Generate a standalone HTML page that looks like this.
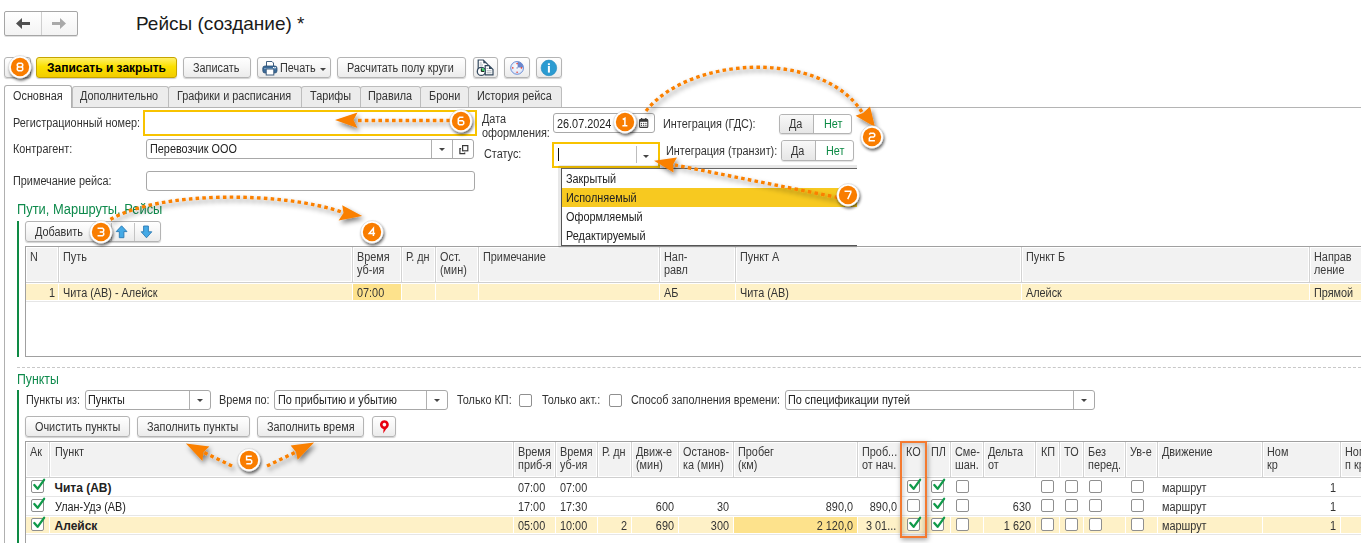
<!DOCTYPE html>
<html><head><meta charset="utf-8">
<style>
html,body{margin:0;padding:0;background:#fff;}
body{width:1361px;height:543px;position:relative;overflow:hidden;font-family:"Liberation Sans",sans-serif;}
.t{position:absolute;white-space:nowrap;}
.b{position:absolute;}
svg.b{overflow:visible;}
</style></head><body>

<div class="b" style="left:4px;top:11px;width:74px;height:25px;border:1px solid #a6a6a6;border-radius:2px;background:linear-gradient(#ffffff,#f3f3f3);box-sizing:border-box;box-shadow:0 1px 0 rgba(0,0,0,.12)"></div>
<div class="b" style="left:41px;top:12px;width:1px;height:23px;background:#cfcfcf"></div>
<svg class="b" style="left:15px;top:17px" width="16" height="13" viewBox="0 0 16 13"><path d="M1 6.5 L7 1 L7 5 L15 5 L15 8 L7 8 L7 12 Z" fill="#505050"/></svg>
<svg class="b" style="left:51px;top:17px" width="16" height="13" viewBox="0 0 16 13"><path d="M15 6.5 L9 1 L9 5 L1 5 L1 8 L9 8 L9 12 Z" fill="#a9a9a9"/></svg>
<div class="t" style="left:136px;top:13.2px;font-size:19px;line-height:22px;color:#1a1a1a;font-weight:400;letter-spacing:0px;">Рейсы (создание) *</div>
<div class="b" style="left:4px;top:57px;width:27px;height:21px;border:1px solid #b4b4b4;border-radius:3px;background:linear-gradient(#ffffff,#f6f6f6 50%,#ebebeb);box-shadow:0 1px 1px rgba(0,0,0,.18);box-sizing:border-box;"></div>
<div class="b" style="left:36px;top:57px;width:141px;height:21px;border:1px solid #c6a400;border-radius:3px;background:linear-gradient(#fff06a,#fbe000 45%,#f2cc00);box-sizing:border-box;box-shadow:0 1px 1px rgba(0,0,0,.2)"></div>
<div class="t" style="left:47px;top:61px;font-size:12px;line-height:14px;color:#000;font-weight:700;letter-spacing:0px;">Записать и закрыть</div>
<div class="b" style="left:183px;top:57px;width:67.5px;height:21px;border:1px solid #b4b4b4;border-radius:3px;background:linear-gradient(#ffffff,#f6f6f6 50%,#ebebeb);box-shadow:0 1px 1px rgba(0,0,0,.18);box-sizing:border-box;"></div>
<div class="t" style="left:193px;top:61px;font-size:12px;line-height:14px;color:#333;font-weight:400;letter-spacing:0px;transform:scaleX(0.905);transform-origin:0 0;">Записать</div>
<div class="b" style="left:257px;top:57px;width:73.5px;height:21px;border:1px solid #b4b4b4;border-radius:3px;background:linear-gradient(#ffffff,#f6f6f6 50%,#ebebeb);box-shadow:0 1px 1px rgba(0,0,0,.18);box-sizing:border-box;"></div>
<svg class="b" style="left:262px;top:60px" width="16" height="16" viewBox="0 0 16 16"><path d="M4.5 1.5 H10 L11.5 3 V7 H4.5 Z" fill="#fff" stroke="#3f5f80" stroke-width="1"/><rect x="0.8" y="6" width="14.2" height="7" rx="2.2" fill="#3a6a98" stroke="#2a4f75" stroke-width=".8"/><rect x="2.2" y="8" width="11.4" height="1.2" fill="#7ea6cc"/><rect x="11" y="7" width="1.2" height="1" fill="#fff"/><rect x="12.6" y="7" width="1.2" height="1" fill="#fff"/><rect x="4.2" y="9" width="7.6" height="6" fill="#fff" stroke="#3f5f80" stroke-width="1"/></svg>
<div class="t" style="left:280px;top:61px;font-size:12px;line-height:14px;color:#333;font-weight:400;letter-spacing:0px;transform:scaleX(0.905);transform-origin:0 0;">Печать</div>
<div class="b" style="left:320px;top:68px;width:0;height:0;border-left:3px solid transparent;border-right:3px solid transparent;border-top:3px solid #444"></div>
<div class="b" style="left:337px;top:57px;width:128.5px;height:21px;border:1px solid #b4b4b4;border-radius:3px;background:linear-gradient(#ffffff,#f6f6f6 50%,#ebebeb);box-shadow:0 1px 1px rgba(0,0,0,.18);box-sizing:border-box;"></div>
<div class="t" style="left:347px;top:61px;font-size:12px;line-height:14px;color:#333;font-weight:400;letter-spacing:0px;transform:scaleX(0.905);transform-origin:0 0;">Расчитать полу круги</div>
<div class="b" style="left:472.5px;top:57px;width:25px;height:21px;border:1px solid #b4b4b4;border-radius:3px;background:linear-gradient(#ffffff,#f6f6f6 50%,#ebebeb);box-shadow:0 1px 1px rgba(0,0,0,.18);box-sizing:border-box;"></div>
<svg class="b" style="left:476px;top:59px" width="19" height="18" viewBox="0 0 19 18"><path d="M2.2 1 H7.3 L12 5.7 V9.5 H2.2 Z" fill="#fff" stroke="#34495e" stroke-width="1.2"/><path d="M7.3 1 V4.2 H10.5 Z" fill="#34495e"/><path d="M3.6 4 H5.8 M3.6 6 H7" stroke="#9aa4ae" stroke-width=".9"/><path d="M9.2 6.6 H13 L17 10.6 V15.8 H9.2 Z" fill="#fff" stroke="#34495e" stroke-width="1.2"/><path d="M13 6.6 V10 H16.4 Z" fill="#34495e"/><path d="M10.6 9.5 H12.4 M10.6 11.8 H15.6 M10.6 13.8 H15.6" stroke="#9aa4ae" stroke-width=".9"/><circle cx="5.3" cy="12.4" r="4" fill="#fff" stroke="#34495e" stroke-width="1.3"/><path d="M5.3 12.4 V9 A3.4 3.4 0 0 1 8.7 12.4 Z" fill="#3cd46a"/><path d="M5.3 9.4 V12.4 H8.2" stroke="#111" stroke-width="1" fill="none"/></svg>
<div class="b" style="left:504px;top:57px;width:25.5px;height:21px;border:1px solid #b4b4b4;border-radius:3px;background:linear-gradient(#ffffff,#f6f6f6 50%,#ebebeb);box-shadow:0 1px 1px rgba(0,0,0,.18);box-sizing:border-box;"></div>
<svg class="b" style="left:509px;top:60px" width="17" height="17" viewBox="0 0 17 17"><defs><radialGradient id="cg" cx=".5" cy=".4" r=".6"><stop offset="0" stop-color="#ffffff"/><stop offset="1" stop-color="#d8e2f6"/></radialGradient></defs><circle cx="8.1" cy="7.9" r="6.4" fill="url(#cg)" stroke="#6d8fd6" stroke-width="1"/><path d="M8.6 1.8 A6 6 0 0 1 14.2 7.4 H8.6 Z" fill="#6a86cc"/><circle cx="8.1" cy="3.6" r="0.8" fill="#f03a2a"/><circle cx="12.4" cy="7.9" r="0.8" fill="#f03a2a"/><circle cx="8.1" cy="12.3" r="0.8" fill="#f03a2a"/><circle cx="3.8" cy="7.9" r="0.8" fill="#f03a2a"/><circle cx="8.1" cy="7.9" r="0.6" fill="#4a6ab0"/></svg>
<div class="b" style="left:536px;top:57px;width:25.5px;height:21px;border:1px solid #b4b4b4;border-radius:3px;background:linear-gradient(#ffffff,#f6f6f6 50%,#ebebeb);box-shadow:0 1px 1px rgba(0,0,0,.18);box-sizing:border-box;"></div>
<svg class="b" style="left:540px;top:59px" width="18" height="18" viewBox="0 0 18 18"><circle cx="8.9" cy="8.9" r="7.8" fill="#2b9bd1" stroke="#1f86bb" stroke-width=".6"/><rect x="7.9" y="4.3" width="2" height="1.8" fill="#fff"/><rect x="7.9" y="7" width="2" height="6.6" fill="#fff"/></svg>
<div class="b" style="left:72px;top:86px;width:97px;height:22px;border:1px solid #bdbdbd;border-bottom:none;border-radius:3px 3px 0 0;background:#ececec;box-sizing:border-box"></div>
<div class="b" style="left:168px;top:86px;width:134px;height:22px;border:1px solid #bdbdbd;border-bottom:none;border-radius:3px 3px 0 0;background:#ececec;box-sizing:border-box"></div>
<div class="b" style="left:301px;top:86px;width:60px;height:22px;border:1px solid #bdbdbd;border-bottom:none;border-radius:3px 3px 0 0;background:#ececec;box-sizing:border-box"></div>
<div class="b" style="left:360px;top:86px;width:61px;height:22px;border:1px solid #bdbdbd;border-bottom:none;border-radius:3px 3px 0 0;background:#ececec;box-sizing:border-box"></div>
<div class="b" style="left:420px;top:86px;width:49px;height:22px;border:1px solid #bdbdbd;border-bottom:none;border-radius:3px 3px 0 0;background:#ececec;box-sizing:border-box"></div>
<div class="b" style="left:468px;top:86px;width:94px;height:22px;border:1px solid #bdbdbd;border-bottom:none;border-radius:3px 3px 0 0;background:#ececec;box-sizing:border-box"></div>
<div class="b" style="left:4px;top:85px;width:68px;height:23px;border:1px solid #b0b0b0;border-bottom:none;border-radius:3px 3px 0 0;background:#fff;box-sizing:border-box"></div>
<div class="t" style="left:13px;top:89px;font-size:12px;line-height:14px;color:#333;font-weight:400;letter-spacing:0px;transform:scaleX(0.905);transform-origin:0 0;">Основная</div>
<div class="t" style="left:80px;top:89px;font-size:12px;line-height:14px;color:#333;font-weight:400;letter-spacing:0px;transform:scaleX(0.905);transform-origin:0 0;">Дополнительно</div>
<div class="t" style="left:177px;top:89px;font-size:12px;line-height:14px;color:#333;font-weight:400;letter-spacing:0px;transform:scaleX(0.905);transform-origin:0 0;">Графики и расписания</div>
<div class="t" style="left:309.8px;top:89px;font-size:12px;line-height:14px;color:#333;font-weight:400;letter-spacing:0px;transform:scaleX(0.905);transform-origin:0 0;">Тарифы</div>
<div class="t" style="left:368.1px;top:89px;font-size:12px;line-height:14px;color:#333;font-weight:400;letter-spacing:0px;transform:scaleX(0.905);transform-origin:0 0;">Правила</div>
<div class="t" style="left:429px;top:89px;font-size:12px;line-height:14px;color:#333;font-weight:400;letter-spacing:0px;transform:scaleX(0.905);transform-origin:0 0;">Брони</div>
<div class="t" style="left:476.9px;top:89px;font-size:12px;line-height:14px;color:#333;font-weight:400;letter-spacing:0px;transform:scaleX(0.905);transform-origin:0 0;">История рейса</div>
<div class="b" style="left:71.5px;top:107px;width:1289.5px;height:1px;background:#b4b4b4"></div>
<div class="b" style="left:4px;top:108px;width:1px;height:435px;background:#b0b0b0"></div>
<div class="t" style="left:13.4px;top:116.3px;font-size:12px;line-height:14px;color:#333;font-weight:400;letter-spacing:0px;transform:scaleX(0.905);transform-origin:0 0;">Регистрационный номер:</div>
<div class="b" style="left:143px;top:110px;width:333.5px;height:26px;border:2px solid #f8c300;background:#fff;box-sizing:border-box"></div>
<div class="t" style="left:13.4px;top:142px;font-size:12px;line-height:14px;color:#333;font-weight:400;letter-spacing:0px;transform:scaleX(0.905);transform-origin:0 0;">Контрагент:</div>
<div class="b" style="left:146px;top:139px;width:328px;height:20px;border:1px solid #a8a8a8;border-radius:3px;background:#fff;box-sizing:border-box;"></div>
<div class="b" style="left:431px;top:140px;width:1px;height:18px;background:#b0b0b0"></div>
<div class="b" style="left:452px;top:140px;width:1px;height:18px;background:#b0b0b0"></div>
<div class="b" style="left:438.5px;top:147.5px;width:0;height:0;border-left:3px solid transparent;border-right:3px solid transparent;border-top:3px solid #444"></div>
<svg class="b" style="left:457px;top:143px" width="13" height="13" viewBox="0 0 13 13"><rect x="5.6" y="2.6" width="5.2" height="5.2" fill="#fff" stroke="#3a3a3a" stroke-width="1.2"/><path d="M4.1 5.6 H2.9 V10.7 H7.7 V9.5" fill="none" stroke="#3a3a3a" stroke-width="1.2"/></svg>
<div class="t" style="left:150px;top:142px;font-size:12px;line-height:14px;color:#222;font-weight:400;letter-spacing:0px;transform:scaleX(0.905);transform-origin:0 0;">Перевозчик ООО</div>
<div class="t" style="left:13.4px;top:174px;font-size:12px;line-height:14px;color:#333;font-weight:400;letter-spacing:0px;transform:scaleX(0.905);transform-origin:0 0;">Примечание рейса:</div>
<div class="b" style="left:146px;top:171px;width:329px;height:20px;border:1px solid #a8a8a8;border-radius:3px;background:#fff;box-sizing:border-box;"></div>
<div class="t" style="left:482px;top:112.4px;font-size:12px;line-height:14px;color:#333;font-weight:400;letter-spacing:0px;transform:scaleX(0.905);transform-origin:0 0;">Дата</div>
<div class="t" style="left:482px;top:125.5px;font-size:12px;line-height:14px;color:#333;font-weight:400;letter-spacing:0px;transform:scaleX(0.905);transform-origin:0 0;">оформления:</div>
<div class="b" style="left:553px;top:113px;width:102px;height:20px;border:1px solid #a8a8a8;border-radius:3px;background:#fff;box-sizing:border-box;"></div>
<div class="t" style="left:556.5px;top:116.5px;font-size:12px;line-height:14px;color:#222;font-weight:400;letter-spacing:0px;transform:scaleX(0.905);transform-origin:0 0;">26.07.2024</div>
<svg class="b" style="left:639px;top:118px" width="10" height="10" viewBox="0 0 10 10"><rect x="0.6" y="1.4" width="8.2" height="8" rx="1" fill="#fff" stroke="#3a3a3a" stroke-width="1.1"/><rect x="0.6" y="1.4" width="8.2" height="2.4" fill="#3a3a3a"/><rect x="2" y="0" width="1.2" height="2" fill="#3a3a3a"/><rect x="6.2" y="0" width="1.2" height="2" fill="#3a3a3a"/><circle cx="2.5" cy="5.5" r=".65" fill="#444"/><circle cx="4.7" cy="5.5" r=".65" fill="#444"/><circle cx="6.9" cy="5.5" r=".65" fill="#444"/><circle cx="2.5" cy="7.5" r=".65" fill="#444"/><circle cx="4.7" cy="7.5" r=".65" fill="#444"/><circle cx="6.9" cy="7.5" r=".65" fill="#444"/></svg>
<div class="t" style="left:484px;top:147.3px;font-size:12px;line-height:14px;color:#333;font-weight:400;letter-spacing:0px;transform:scaleX(0.905);transform-origin:0 0;">Статус:</div>
<div class="b" style="left:552px;top:142px;width:107.5px;height:26px;border:2px solid #f8c300;background:#fff;box-sizing:border-box"></div>
<div class="b" style="left:635.5px;top:146px;width:1px;height:17px;background:#bdbdbd"></div>
<div class="b" style="left:558px;top:148px;width:1px;height:13px;background:#111"></div>
<div class="b" style="left:642.5px;top:154.5px;width:0;height:0;border-left:3px solid transparent;border-right:3px solid transparent;border-top:3px solid #444"></div>
<div class="t" style="left:663.4px;top:117px;font-size:12px;line-height:14px;color:#333;font-weight:400;letter-spacing:0px;transform:scaleX(0.905);transform-origin:0 0;">Интеграция (ГДС):</div>
<div class="b" style="left:779px;top:113.5px;width:73px;height:20.5px;border:1px solid #b4b4b4;border-radius:3px;background:#fff;box-sizing:border-box;box-shadow:0 1px 1px rgba(0,0,0,.12)"></div>
<div class="b" style="left:780px;top:114.5px;width:33.3px;height:18.5px;background:linear-gradient(#f8f8f8,#e6e6e6);border-radius:2px 0 0 2px"></div>
<div class="b" style="left:813.3px;top:114.5px;width:1px;height:18.5px;background:#b4b4b4"></div>
<div class="t" style="left:789px;top:117px;font-size:12px;line-height:14px;color:#333;font-weight:400;letter-spacing:0px;transform:scaleX(0.905);transform-origin:0 0;">Да</div>
<div class="t" style="left:824px;top:117px;font-size:12px;line-height:14px;color:#0d8a45;font-weight:400;letter-spacing:0px;transform:scaleX(0.905);transform-origin:0 0;">Нет</div>
<div class="t" style="left:665.5px;top:143.8px;font-size:12px;line-height:14px;color:#333;font-weight:400;letter-spacing:0px;transform:scaleX(0.905);transform-origin:0 0;">Интеграция (транзит):</div>
<div class="b" style="left:781px;top:140.2px;width:72.5px;height:20.6px;border:1px solid #b4b4b4;border-radius:3px;background:#fff;box-sizing:border-box;box-shadow:0 1px 1px rgba(0,0,0,.12)"></div>
<div class="b" style="left:782px;top:141.2px;width:33.4px;height:18.6px;background:linear-gradient(#f8f8f8,#e6e6e6);border-radius:2px 0 0 2px"></div>
<div class="b" style="left:815.4px;top:141.2px;width:1px;height:18.6px;background:#b4b4b4"></div>
<div class="t" style="left:791px;top:143.8px;font-size:12px;line-height:14px;color:#333;font-weight:400;letter-spacing:0px;transform:scaleX(0.905);transform-origin:0 0;">Да</div>
<div class="t" style="left:826px;top:143.8px;font-size:12px;line-height:14px;color:#0d8a45;font-weight:400;letter-spacing:0px;transform:scaleX(0.905);transform-origin:0 0;">Нет</div>
<div class="t" style="left:17.4px;top:201.42px;font-size:14px;line-height:16px;color:#0e8a4c;font-weight:400;letter-spacing:0px;transform:scaleX(0.92);transform-origin:0 0;">Пути, Маршруты, Рейсы</div>
<div class="b" style="left:17px;top:221px;width:2px;height:136px;background:#0e8a44"></div>
<div class="b" style="left:25px;top:221px;width:136px;height:20.5px;border:1px solid #b4b4b4;border-radius:3px;background:linear-gradient(#ffffff,#f6f6f6 50%,#ebebeb);box-shadow:0 1px 1px rgba(0,0,0,.18);box-sizing:border-box;"></div>
<div class="b" style="left:110.5px;top:222.5px;width:1px;height:18.5px;background:#c4c4c4"></div>
<div class="b" style="left:134.3px;top:222.5px;width:1px;height:18.5px;background:#c4c4c4"></div>
<div class="t" style="left:35px;top:225px;font-size:12px;line-height:14px;color:#333;font-weight:400;letter-spacing:0px;transform:scaleX(0.905);transform-origin:0 0;">Добавить</div>
<svg class="b" style="left:115px;top:225px" width="14" height="14" viewBox="0 0 14 14"><path d="M6.6 0.8 L12 6.6 H8.9 V12.7 H4.3 V6.6 H1.2 Z" fill="#45aae6" stroke="#2a79b2" stroke-width=".9" stroke-linejoin="miter"/></svg>
<svg class="b" style="left:140px;top:225px" width="14" height="14" viewBox="0 0 14 14"><path d="M6.5 12.8 L11.8 6.8 H8.4 V1 H3.6 V6.8 H1.2 Z" fill="#45aae6" stroke="#2a79b2" stroke-width=".9" stroke-linejoin="miter"/></svg>
<div class="b" style="left:25px;top:246px;width:1375px;height:111px;border:1px solid #a0a0a0;background:#fff;box-sizing:border-box"></div>
<div class="b" style="left:27px;top:248px;width:30px;height:33px;background:#f2f2f2"></div>
<div class="b" style="left:60px;top:248px;width:291px;height:33px;background:#f2f2f2"></div>
<div class="b" style="left:354px;top:248px;width:46px;height:33px;background:#f2f2f2"></div>
<div class="b" style="left:403px;top:248px;width:31px;height:33px;background:#f2f2f2"></div>
<div class="b" style="left:437px;top:248px;width:40px;height:33px;background:#f2f2f2"></div>
<div class="b" style="left:480px;top:248px;width:178px;height:33px;background:#f2f2f2"></div>
<div class="b" style="left:661px;top:248px;width:73px;height:33px;background:#f2f2f2"></div>
<div class="b" style="left:737px;top:248px;width:283px;height:33px;background:#f2f2f2"></div>
<div class="b" style="left:1023px;top:248px;width:285px;height:33px;background:#f2f2f2"></div>
<div class="b" style="left:1311px;top:248px;width:50px;height:33px;background:#f2f2f2"></div>
<div class="b" style="left:58px;top:247px;width:1px;height:35px;background:#d3d3d3"></div>
<div class="b" style="left:352px;top:247px;width:1px;height:35px;background:#d3d3d3"></div>
<div class="b" style="left:401px;top:247px;width:1px;height:35px;background:#d3d3d3"></div>
<div class="b" style="left:435px;top:247px;width:1px;height:35px;background:#d3d3d3"></div>
<div class="b" style="left:478px;top:247px;width:1px;height:35px;background:#d3d3d3"></div>
<div class="b" style="left:659px;top:247px;width:1px;height:35px;background:#d3d3d3"></div>
<div class="b" style="left:735px;top:247px;width:1px;height:35px;background:#d3d3d3"></div>
<div class="b" style="left:1021px;top:247px;width:1px;height:35px;background:#d3d3d3"></div>
<div class="b" style="left:1309px;top:247px;width:1px;height:35px;background:#d3d3d3"></div>
<div class="b" style="left:26px;top:282px;width:1335px;height:1px;background:#cfcfcf"></div>
<div class="b" style="left:26px;top:301px;width:1335px;height:1px;background:#e6e6e6"></div>
<div class="b" style="left:26px;top:284px;width:1335px;height:16px;background:#fef1c7"></div>
<div class="b" style="left:353px;top:284px;width:48px;height:16px;background:#fde28c"></div>
<div class="b" style="left:58px;top:283px;width:1px;height:18px;background:#ffffff"></div>
<div class="b" style="left:352px;top:283px;width:1px;height:18px;background:#ffffff"></div>
<div class="b" style="left:401px;top:283px;width:1px;height:18px;background:#ffffff"></div>
<div class="b" style="left:435px;top:283px;width:1px;height:18px;background:#ffffff"></div>
<div class="b" style="left:478px;top:283px;width:1px;height:18px;background:#ffffff"></div>
<div class="b" style="left:659px;top:283px;width:1px;height:18px;background:#ffffff"></div>
<div class="b" style="left:735px;top:283px;width:1px;height:18px;background:#ffffff"></div>
<div class="b" style="left:1021px;top:283px;width:1px;height:18px;background:#ffffff"></div>
<div class="b" style="left:1309px;top:283px;width:1px;height:18px;background:#ffffff"></div>
<div class="t" style="left:30.2px;top:250px;font-size:12px;line-height:14px;color:#3a3a3a;font-weight:400;letter-spacing:0px;transform:scaleX(0.905);transform-origin:0 0;">N</div>
<div class="t" style="left:63.3px;top:250px;font-size:12px;line-height:14px;color:#3a3a3a;font-weight:400;letter-spacing:0px;transform:scaleX(0.905);transform-origin:0 0;">Путь</div>
<div class="t" style="left:357.4px;top:250px;font-size:12px;line-height:14px;color:#3a3a3a;font-weight:400;letter-spacing:0px;transform:scaleX(0.905);transform-origin:0 0;">Время</div>
<div class="t" style="left:357.4px;top:263px;font-size:12px;line-height:14px;color:#3a3a3a;font-weight:400;letter-spacing:0px;transform:scaleX(0.905);transform-origin:0 0;">уб-ия</div>
<div class="t" style="left:406px;top:250px;font-size:12px;line-height:14px;color:#3a3a3a;font-weight:400;letter-spacing:0px;transform:scaleX(0.905);transform-origin:0 0;">Р. дн</div>
<div class="t" style="left:440px;top:250px;font-size:12px;line-height:14px;color:#3a3a3a;font-weight:400;letter-spacing:0px;transform:scaleX(0.905);transform-origin:0 0;">Ост.</div>
<div class="t" style="left:440px;top:263px;font-size:12px;line-height:14px;color:#3a3a3a;font-weight:400;letter-spacing:0px;transform:scaleX(0.905);transform-origin:0 0;">(мин)</div>
<div class="t" style="left:483px;top:250px;font-size:12px;line-height:14px;color:#3a3a3a;font-weight:400;letter-spacing:0px;transform:scaleX(0.905);transform-origin:0 0;">Примечание</div>
<div class="t" style="left:663.8px;top:250px;font-size:12px;line-height:14px;color:#3a3a3a;font-weight:400;letter-spacing:0px;transform:scaleX(0.905);transform-origin:0 0;">Нап-</div>
<div class="t" style="left:663.8px;top:263px;font-size:12px;line-height:14px;color:#3a3a3a;font-weight:400;letter-spacing:0px;transform:scaleX(0.905);transform-origin:0 0;">равл</div>
<div class="t" style="left:740px;top:250px;font-size:12px;line-height:14px;color:#3a3a3a;font-weight:400;letter-spacing:0px;transform:scaleX(0.905);transform-origin:0 0;">Пункт А</div>
<div class="t" style="left:1026px;top:250px;font-size:12px;line-height:14px;color:#3a3a3a;font-weight:400;letter-spacing:0px;transform:scaleX(0.905);transform-origin:0 0;">Пункт Б</div>
<div class="t" style="left:1314.3px;top:250px;font-size:12px;line-height:14px;color:#3a3a3a;font-weight:400;letter-spacing:0px;transform:scaleX(0.905);transform-origin:0 0;">Направ</div>
<div class="t" style="left:1314.3px;top:263px;font-size:12px;line-height:14px;color:#3a3a3a;font-weight:400;letter-spacing:0px;transform:scaleX(0.905);transform-origin:0 0;">ление</div>
<div class="t" style="left:-245.2px;width:300px;text-align:right;top:286px;font-size:12px;line-height:14px;color:#333;font-weight:400;letter-spacing:0px;transform:scaleX(0.905);transform-origin:100% 0;">1</div>
<div class="t" style="left:63.3px;top:286px;font-size:12px;line-height:14px;color:#333;font-weight:400;letter-spacing:0px;transform:scaleX(0.905);transform-origin:0 0;">Чита (АВ) - Алейск</div>
<div class="t" style="left:357.4px;top:286px;font-size:12px;line-height:14px;color:#333;font-weight:400;letter-spacing:0px;transform:scaleX(0.905);transform-origin:0 0;">07:00</div>
<div class="t" style="left:663.8px;top:286px;font-size:12px;line-height:14px;color:#333;font-weight:400;letter-spacing:0px;transform:scaleX(0.905);transform-origin:0 0;">АБ</div>
<div class="t" style="left:740px;top:286px;font-size:12px;line-height:14px;color:#333;font-weight:400;letter-spacing:0px;transform:scaleX(0.905);transform-origin:0 0;">Чита (АВ)</div>
<div class="t" style="left:1026px;top:286px;font-size:12px;line-height:14px;color:#333;font-weight:400;letter-spacing:0px;transform:scaleX(0.905);transform-origin:0 0;">Алейск</div>
<div class="t" style="left:1314.3px;top:286px;font-size:12px;line-height:14px;color:#333;font-weight:400;letter-spacing:0px;transform:scaleX(0.905);transform-origin:0 0;">Прямой</div>
<div class="b" style="left:17px;top:367px;width:1344px;height:0;border-top:1px dashed #c8c8c8"></div>
<div class="t" style="left:17.2px;top:370.52px;font-size:14px;line-height:16px;color:#0e8a4c;font-weight:400;letter-spacing:0px;transform:scaleX(0.88);transform-origin:0 0;">Пункты</div>
<div class="b" style="left:17px;top:390.3px;width:2px;height:152.7px;background:#0e8a44"></div>
<div class="t" style="left:25.6px;top:393px;font-size:12px;line-height:14px;color:#333;font-weight:400;letter-spacing:0px;transform:scaleX(0.905);transform-origin:0 0;">Пункты из:</div>
<div class="b" style="left:85px;top:390px;width:126px;height:20px;border:1px solid #a8a8a8;border-radius:3px;background:#fff;box-sizing:border-box;"></div>
<div class="b" style="left:189px;top:391px;width:1px;height:18px;background:#b0b0b0"></div>
<div class="b" style="left:196.8px;top:399px;width:0;height:0;border-left:3px solid transparent;border-right:3px solid transparent;border-top:3px solid #444"></div>
<div class="t" style="left:88px;top:393px;font-size:12px;line-height:14px;color:#222;font-weight:400;letter-spacing:0px;transform:scaleX(0.905);transform-origin:0 0;">Пункты</div>
<div class="t" style="left:219.1px;top:393px;font-size:12px;line-height:14px;color:#333;font-weight:400;letter-spacing:0px;transform:scaleX(0.905);transform-origin:0 0;">Время по:</div>
<div class="b" style="left:274px;top:390px;width:174px;height:20px;border:1px solid #a8a8a8;border-radius:3px;background:#fff;box-sizing:border-box;"></div>
<div class="b" style="left:426px;top:391px;width:1px;height:18px;background:#b0b0b0"></div>
<div class="b" style="left:433.8px;top:399px;width:0;height:0;border-left:3px solid transparent;border-right:3px solid transparent;border-top:3px solid #444"></div>
<div class="t" style="left:277.5px;top:393px;font-size:12px;line-height:14px;color:#222;font-weight:400;letter-spacing:0px;transform:scaleX(0.905);transform-origin:0 0;">По прибытию и убытию</div>
<div class="t" style="left:457.2px;top:393px;font-size:12px;line-height:14px;color:#333;font-weight:400;letter-spacing:0px;transform:scaleX(0.905);transform-origin:0 0;">Только КП:</div>
<div class="b" style="left:519.4px;top:394.3px;width:13px;height:13px;border:1px solid #8f8f8f;border-radius:2px;background:#fff;box-sizing:border-box"></div>
<div class="t" style="left:541.9px;top:393px;font-size:12px;line-height:14px;color:#333;font-weight:400;letter-spacing:0px;transform:scaleX(0.905);transform-origin:0 0;">Только акт.:</div>
<div class="b" style="left:609.3px;top:394.3px;width:13px;height:13px;border:1px solid #8f8f8f;border-radius:2px;background:#fff;box-sizing:border-box"></div>
<div class="t" style="left:630.5px;top:393px;font-size:12px;line-height:14px;color:#333;font-weight:400;letter-spacing:0px;transform:scaleX(0.905);transform-origin:0 0;">Способ заполнения времени:</div>
<div class="b" style="left:785px;top:390px;width:310px;height:20px;border:1px solid #a8a8a8;border-radius:3px;background:#fff;box-sizing:border-box;"></div>
<div class="b" style="left:1073px;top:391px;width:1px;height:18px;background:#b0b0b0"></div>
<div class="b" style="left:1081px;top:399px;width:0;height:0;border-left:3px solid transparent;border-right:3px solid transparent;border-top:3px solid #444"></div>
<div class="t" style="left:788.3px;top:393px;font-size:12px;line-height:14px;color:#222;font-weight:400;letter-spacing:0px;transform:scaleX(0.905);transform-origin:0 0;">По спецификации путей</div>
<div class="b" style="left:25.2px;top:416.4px;width:105.3px;height:20.6px;border:1px solid #b4b4b4;border-radius:3px;background:linear-gradient(#ffffff,#f6f6f6 50%,#ebebeb);box-shadow:0 1px 1px rgba(0,0,0,.18);box-sizing:border-box;"></div>
<div class="t" style="left:34.5px;top:419.5px;font-size:12px;line-height:14px;color:#333;font-weight:400;letter-spacing:0px;transform:scaleX(0.905);transform-origin:0 0;">Очистить пункты</div>
<div class="b" style="left:137.2px;top:416.4px;width:112.5px;height:20.6px;border:1px solid #b4b4b4;border-radius:3px;background:linear-gradient(#ffffff,#f6f6f6 50%,#ebebeb);box-shadow:0 1px 1px rgba(0,0,0,.18);box-sizing:border-box;"></div>
<div class="t" style="left:147px;top:419.5px;font-size:12px;line-height:14px;color:#333;font-weight:400;letter-spacing:0px;transform:scaleX(0.905);transform-origin:0 0;">Заполнить пункты</div>
<div class="b" style="left:256.7px;top:416.4px;width:107.6px;height:20.6px;border:1px solid #b4b4b4;border-radius:3px;background:linear-gradient(#ffffff,#f6f6f6 50%,#ebebeb);box-shadow:0 1px 1px rgba(0,0,0,.18);box-sizing:border-box;"></div>
<div class="t" style="left:266.5px;top:419.5px;font-size:12px;line-height:14px;color:#333;font-weight:400;letter-spacing:0px;transform:scaleX(0.905);transform-origin:0 0;">Заполнить время</div>
<div class="b" style="left:371.5px;top:416.4px;width:24.7px;height:20.6px;border:1px solid #b4b4b4;border-radius:3px;background:linear-gradient(#ffffff,#f6f6f6 50%,#ebebeb);box-shadow:0 1px 1px rgba(0,0,0,.18);box-sizing:border-box;"></div>
<svg class="b" style="left:378px;top:419px" width="13" height="16" viewBox="0 0 13 16"><path fill-rule="evenodd" d="M6.4 1.2 A4.4 4.4 0 1 1 6.39 1.2 Z M6.4 3.8 A1.8 1.8 0 1 0 6.41 3.8 Z" fill="#e8000f"/><path d="M9.6 7.8 L5.2 14.6 L5.6 9.6 Z" fill="#e8000f"/></svg>
<div class="b" style="left:25px;top:441px;width:1375px;height:159px;border:1px solid #a0a0a0;background:#fff;box-sizing:border-box"></div>
<div class="b" style="left:27px;top:443px;width:21px;height:33px;background:#f2f2f2"></div>
<div class="b" style="left:51px;top:443px;width:461px;height:33px;background:#f2f2f2"></div>
<div class="b" style="left:515px;top:443px;width:39px;height:33px;background:#f2f2f2"></div>
<div class="b" style="left:557px;top:443px;width:39px;height:33px;background:#f2f2f2"></div>
<div class="b" style="left:599px;top:443px;width:31px;height:33px;background:#f2f2f2"></div>
<div class="b" style="left:633px;top:443px;width:44px;height:33px;background:#f2f2f2"></div>
<div class="b" style="left:680px;top:443px;width:52px;height:33px;background:#f2f2f2"></div>
<div class="b" style="left:735px;top:443px;width:121px;height:33px;background:#f2f2f2"></div>
<div class="b" style="left:859px;top:443px;width:41px;height:33px;background:#f2f2f2"></div>
<div class="b" style="left:903px;top:443px;width:22px;height:33px;background:#f2f2f2"></div>
<div class="b" style="left:928px;top:443px;width:21px;height:33px;background:#f2f2f2"></div>
<div class="b" style="left:952px;top:443px;width:30px;height:33px;background:#f2f2f2"></div>
<div class="b" style="left:985px;top:443px;width:49px;height:33px;background:#f2f2f2"></div>
<div class="b" style="left:1037px;top:443px;width:21px;height:33px;background:#f2f2f2"></div>
<div class="b" style="left:1061px;top:443px;width:21px;height:33px;background:#f2f2f2"></div>
<div class="b" style="left:1085px;top:443px;width:39px;height:33px;background:#f2f2f2"></div>
<div class="b" style="left:1127px;top:443px;width:29px;height:33px;background:#f2f2f2"></div>
<div class="b" style="left:1159px;top:443px;width:102px;height:33px;background:#f2f2f2"></div>
<div class="b" style="left:1264px;top:443px;width:75px;height:33px;background:#f2f2f2"></div>
<div class="b" style="left:1342px;top:443px;width:19px;height:33px;background:#f2f2f2"></div>
<div class="b" style="left:49px;top:442px;width:1px;height:35px;background:#d3d3d3"></div>
<div class="b" style="left:513px;top:442px;width:1px;height:35px;background:#d3d3d3"></div>
<div class="b" style="left:555px;top:442px;width:1px;height:35px;background:#d3d3d3"></div>
<div class="b" style="left:597px;top:442px;width:1px;height:35px;background:#d3d3d3"></div>
<div class="b" style="left:631px;top:442px;width:1px;height:35px;background:#d3d3d3"></div>
<div class="b" style="left:678px;top:442px;width:1px;height:35px;background:#d3d3d3"></div>
<div class="b" style="left:733px;top:442px;width:1px;height:35px;background:#d3d3d3"></div>
<div class="b" style="left:857px;top:442px;width:1px;height:35px;background:#d3d3d3"></div>
<div class="b" style="left:901px;top:442px;width:1px;height:35px;background:#d3d3d3"></div>
<div class="b" style="left:926px;top:442px;width:1px;height:35px;background:#d3d3d3"></div>
<div class="b" style="left:950px;top:442px;width:1px;height:35px;background:#d3d3d3"></div>
<div class="b" style="left:983px;top:442px;width:1px;height:35px;background:#d3d3d3"></div>
<div class="b" style="left:1035px;top:442px;width:1px;height:35px;background:#d3d3d3"></div>
<div class="b" style="left:1059px;top:442px;width:1px;height:35px;background:#d3d3d3"></div>
<div class="b" style="left:1083px;top:442px;width:1px;height:35px;background:#d3d3d3"></div>
<div class="b" style="left:1125px;top:442px;width:1px;height:35px;background:#d3d3d3"></div>
<div class="b" style="left:1157px;top:442px;width:1px;height:35px;background:#d3d3d3"></div>
<div class="b" style="left:1262px;top:442px;width:1px;height:35px;background:#d3d3d3"></div>
<div class="b" style="left:1340px;top:442px;width:1px;height:35px;background:#d3d3d3"></div>
<div class="b" style="left:26px;top:477px;width:1335px;height:1px;background:#cfcfcf"></div>
<div class="b" style="left:26px;top:496px;width:1335px;height:1px;background:#e6e6e6"></div>
<div class="b" style="left:26px;top:515px;width:1335px;height:1px;background:#e6e6e6"></div>
<div class="b" style="left:26px;top:534px;width:1335px;height:1px;background:#e6e6e6"></div>
<div class="b" style="left:26px;top:517px;width:1335px;height:16px;background:#fef1c7"></div>
<div class="b" style="left:734px;top:517px;width:123px;height:16px;background:#fde28c"></div>
<div class="b" style="left:49px;top:516px;width:1px;height:18px;background:#ffffff"></div>
<div class="b" style="left:513px;top:516px;width:1px;height:18px;background:#ffffff"></div>
<div class="b" style="left:555px;top:516px;width:1px;height:18px;background:#ffffff"></div>
<div class="b" style="left:597px;top:516px;width:1px;height:18px;background:#ffffff"></div>
<div class="b" style="left:631px;top:516px;width:1px;height:18px;background:#ffffff"></div>
<div class="b" style="left:678px;top:516px;width:1px;height:18px;background:#ffffff"></div>
<div class="b" style="left:733px;top:516px;width:1px;height:18px;background:#ffffff"></div>
<div class="b" style="left:857px;top:516px;width:1px;height:18px;background:#ffffff"></div>
<div class="b" style="left:901px;top:516px;width:1px;height:18px;background:#ffffff"></div>
<div class="b" style="left:926px;top:516px;width:1px;height:18px;background:#ffffff"></div>
<div class="b" style="left:950px;top:516px;width:1px;height:18px;background:#ffffff"></div>
<div class="b" style="left:983px;top:516px;width:1px;height:18px;background:#ffffff"></div>
<div class="b" style="left:1035px;top:516px;width:1px;height:18px;background:#ffffff"></div>
<div class="b" style="left:1059px;top:516px;width:1px;height:18px;background:#ffffff"></div>
<div class="b" style="left:1083px;top:516px;width:1px;height:18px;background:#ffffff"></div>
<div class="b" style="left:1125px;top:516px;width:1px;height:18px;background:#ffffff"></div>
<div class="b" style="left:1157px;top:516px;width:1px;height:18px;background:#ffffff"></div>
<div class="b" style="left:1262px;top:516px;width:1px;height:18px;background:#ffffff"></div>
<div class="b" style="left:1340px;top:516px;width:1px;height:18px;background:#ffffff"></div>
<div class="t" style="left:29.5px;top:445px;font-size:12px;line-height:14px;color:#3a3a3a;font-weight:400;letter-spacing:0px;transform:scaleX(0.905);transform-origin:0 0;">Ак</div>
<div class="t" style="left:54.5px;top:445px;font-size:12px;line-height:14px;color:#3a3a3a;font-weight:400;letter-spacing:0px;transform:scaleX(0.905);transform-origin:0 0;">Пункт</div>
<div class="t" style="left:518.1px;top:445px;font-size:12px;line-height:14px;color:#3a3a3a;font-weight:400;letter-spacing:0px;transform:scaleX(0.905);transform-origin:0 0;">Время</div>
<div class="t" style="left:518.1px;top:458px;font-size:12px;line-height:14px;color:#3a3a3a;font-weight:400;letter-spacing:0px;transform:scaleX(0.905);transform-origin:0 0;">приб-я</div>
<div class="t" style="left:560px;top:445px;font-size:12px;line-height:14px;color:#3a3a3a;font-weight:400;letter-spacing:0px;transform:scaleX(0.905);transform-origin:0 0;">Время</div>
<div class="t" style="left:560px;top:458px;font-size:12px;line-height:14px;color:#3a3a3a;font-weight:400;letter-spacing:0px;transform:scaleX(0.905);transform-origin:0 0;">уб-ия</div>
<div class="t" style="left:602px;top:445px;font-size:12px;line-height:14px;color:#3a3a3a;font-weight:400;letter-spacing:0px;transform:scaleX(0.905);transform-origin:0 0;">Р. дн</div>
<div class="t" style="left:636px;top:445px;font-size:12px;line-height:14px;color:#3a3a3a;font-weight:400;letter-spacing:0px;transform:scaleX(0.905);transform-origin:0 0;">Движ-е</div>
<div class="t" style="left:636px;top:458px;font-size:12px;line-height:14px;color:#3a3a3a;font-weight:400;letter-spacing:0px;transform:scaleX(0.905);transform-origin:0 0;">(мин)</div>
<div class="t" style="left:683px;top:445px;font-size:12px;line-height:14px;color:#3a3a3a;font-weight:400;letter-spacing:0px;transform:scaleX(0.905);transform-origin:0 0;">Останов-</div>
<div class="t" style="left:683px;top:458px;font-size:12px;line-height:14px;color:#3a3a3a;font-weight:400;letter-spacing:0px;transform:scaleX(0.905);transform-origin:0 0;">ка (мин)</div>
<div class="t" style="left:738px;top:445px;font-size:12px;line-height:14px;color:#3a3a3a;font-weight:400;letter-spacing:0px;transform:scaleX(0.905);transform-origin:0 0;">Пробег</div>
<div class="t" style="left:738px;top:458px;font-size:12px;line-height:14px;color:#3a3a3a;font-weight:400;letter-spacing:0px;transform:scaleX(0.905);transform-origin:0 0;">(км)</div>
<div class="t" style="left:862px;top:445px;font-size:12px;line-height:14px;color:#3a3a3a;font-weight:400;letter-spacing:0px;transform:scaleX(0.905);transform-origin:0 0;">Проб...</div>
<div class="t" style="left:862px;top:458px;font-size:12px;line-height:14px;color:#3a3a3a;font-weight:400;letter-spacing:0px;transform:scaleX(0.905);transform-origin:0 0;">от нач.</div>
<div class="t" style="left:906px;top:445px;font-size:12px;line-height:14px;color:#3a3a3a;font-weight:400;letter-spacing:0px;transform:scaleX(0.905);transform-origin:0 0;">КО</div>
<div class="t" style="left:930.5px;top:445px;font-size:12px;line-height:14px;color:#3a3a3a;font-weight:400;letter-spacing:0px;transform:scaleX(0.905);transform-origin:0 0;">ПЛ</div>
<div class="t" style="left:955px;top:445px;font-size:12px;line-height:14px;color:#3a3a3a;font-weight:400;letter-spacing:0px;transform:scaleX(0.905);transform-origin:0 0;">Сме-</div>
<div class="t" style="left:955px;top:458px;font-size:12px;line-height:14px;color:#3a3a3a;font-weight:400;letter-spacing:0px;transform:scaleX(0.905);transform-origin:0 0;">шан.</div>
<div class="t" style="left:988px;top:445px;font-size:12px;line-height:14px;color:#3a3a3a;font-weight:400;letter-spacing:0px;transform:scaleX(0.905);transform-origin:0 0;">Дельта</div>
<div class="t" style="left:988px;top:458px;font-size:12px;line-height:14px;color:#3a3a3a;font-weight:400;letter-spacing:0px;transform:scaleX(0.905);transform-origin:0 0;">от</div>
<div class="t" style="left:1040.5px;top:445px;font-size:12px;line-height:14px;color:#3a3a3a;font-weight:400;letter-spacing:0px;transform:scaleX(0.905);transform-origin:0 0;">КП</div>
<div class="t" style="left:1064px;top:445px;font-size:12px;line-height:14px;color:#3a3a3a;font-weight:400;letter-spacing:0px;transform:scaleX(0.905);transform-origin:0 0;">ТО</div>
<div class="t" style="left:1088px;top:445px;font-size:12px;line-height:14px;color:#3a3a3a;font-weight:400;letter-spacing:0px;transform:scaleX(0.905);transform-origin:0 0;">Без</div>
<div class="t" style="left:1088px;top:458px;font-size:12px;line-height:14px;color:#3a3a3a;font-weight:400;letter-spacing:0px;transform:scaleX(0.905);transform-origin:0 0;">перед.</div>
<div class="t" style="left:1130px;top:445px;font-size:12px;line-height:14px;color:#3a3a3a;font-weight:400;letter-spacing:0px;transform:scaleX(0.905);transform-origin:0 0;">Ув-е</div>
<div class="t" style="left:1162px;top:445px;font-size:12px;line-height:14px;color:#3a3a3a;font-weight:400;letter-spacing:0px;transform:scaleX(0.905);transform-origin:0 0;">Движение</div>
<div class="t" style="left:1267.2px;top:445px;font-size:12px;line-height:14px;color:#3a3a3a;font-weight:400;letter-spacing:0px;transform:scaleX(0.905);transform-origin:0 0;">Ном</div>
<div class="t" style="left:1267.2px;top:458px;font-size:12px;line-height:14px;color:#3a3a3a;font-weight:400;letter-spacing:0px;transform:scaleX(0.905);transform-origin:0 0;">кр</div>
<div class="t" style="left:1345px;top:445px;font-size:12px;line-height:14px;color:#3a3a3a;font-weight:400;letter-spacing:0px;transform:scaleX(0.905);transform-origin:0 0;">Ном</div>
<div class="t" style="left:1345px;top:458px;font-size:12px;line-height:14px;color:#3a3a3a;font-weight:400;letter-spacing:0px;transform:scaleX(0.905);transform-origin:0 0;">п кр</div>
<div class="b" style="left:30.8px;top:480px;width:13px;height:13px;border:1px solid #8f8f8f;border-radius:2px;background:#fff;box-sizing:border-box"></div>
<svg class="b" style="left:29.8px;top:477px" width="18" height="18" viewBox="0 0 18 18"><path d="M4.3 8 L7.6 11.8 L14.1 2.8" fill="none" stroke="#109a4a" stroke-width="2.3" stroke-linecap="round" stroke-linejoin="round"/></svg>
<div class="t" style="left:54.5px;top:481px;font-size:12px;line-height:14px;color:#222;font-weight:700;letter-spacing:0px;">Чита (АВ)</div>
<div class="t" style="left:518.1px;top:481px;font-size:12px;line-height:14px;color:#333;font-weight:400;letter-spacing:0px;transform:scaleX(0.905);transform-origin:0 0;">07:00</div>
<div class="t" style="left:560px;top:481px;font-size:12px;line-height:14px;color:#333;font-weight:400;letter-spacing:0px;transform:scaleX(0.905);transform-origin:0 0;">07:00</div>
<div class="b" style="left:906.5px;top:480px;width:13px;height:13px;border:1px solid #8f8f8f;border-radius:2px;background:#fff;box-sizing:border-box"></div>
<svg class="b" style="left:905.5px;top:477px" width="18" height="18" viewBox="0 0 18 18"><path d="M4.3 8 L7.6 11.8 L14.1 2.8" fill="none" stroke="#109a4a" stroke-width="2.3" stroke-linecap="round" stroke-linejoin="round"/></svg>
<div class="b" style="left:931px;top:480px;width:13px;height:13px;border:1px solid #8f8f8f;border-radius:2px;background:#fff;box-sizing:border-box"></div>
<svg class="b" style="left:930px;top:477px" width="18" height="18" viewBox="0 0 18 18"><path d="M4.3 8 L7.6 11.8 L14.1 2.8" fill="none" stroke="#109a4a" stroke-width="2.3" stroke-linecap="round" stroke-linejoin="round"/></svg>
<div class="b" style="left:955.8px;top:480px;width:13px;height:13px;border:1px solid #8f8f8f;border-radius:2px;background:#fff;box-sizing:border-box"></div>
<div class="b" style="left:1040.9px;top:480px;width:13px;height:13px;border:1px solid #8f8f8f;border-radius:2px;background:#fff;box-sizing:border-box"></div>
<div class="b" style="left:1064.5px;top:480px;width:13px;height:13px;border:1px solid #8f8f8f;border-radius:2px;background:#fff;box-sizing:border-box"></div>
<div class="b" style="left:1088.5px;top:480px;width:13px;height:13px;border:1px solid #8f8f8f;border-radius:2px;background:#fff;box-sizing:border-box"></div>
<div class="b" style="left:1130.5px;top:480px;width:13px;height:13px;border:1px solid #8f8f8f;border-radius:2px;background:#fff;box-sizing:border-box"></div>
<div class="t" style="left:1162px;top:481px;font-size:12px;line-height:14px;color:#333;font-weight:400;letter-spacing:0px;transform:scaleX(0.905);transform-origin:0 0;">маршрут</div>
<div class="t" style="left:1035.8px;width:300px;text-align:right;top:481px;font-size:12px;line-height:14px;color:#333;font-weight:400;letter-spacing:0px;transform:scaleX(0.905);transform-origin:100% 0;">1</div>
<div class="b" style="left:30.8px;top:499px;width:13px;height:13px;border:1px solid #8f8f8f;border-radius:2px;background:#fff;box-sizing:border-box"></div>
<svg class="b" style="left:29.8px;top:496px" width="18" height="18" viewBox="0 0 18 18"><path d="M4.3 8 L7.6 11.8 L14.1 2.8" fill="none" stroke="#109a4a" stroke-width="2.3" stroke-linecap="round" stroke-linejoin="round"/></svg>
<div class="t" style="left:54.5px;top:500px;font-size:12px;line-height:14px;color:#222;font-weight:400;letter-spacing:0px;transform:scaleX(0.905);transform-origin:0 0;">Улан-Удэ (АВ)</div>
<div class="t" style="left:518.1px;top:500px;font-size:12px;line-height:14px;color:#333;font-weight:400;letter-spacing:0px;transform:scaleX(0.905);transform-origin:0 0;">17:00</div>
<div class="t" style="left:560px;top:500px;font-size:12px;line-height:14px;color:#333;font-weight:400;letter-spacing:0px;transform:scaleX(0.905);transform-origin:0 0;">17:30</div>
<div class="t" style="left:374.2px;width:300px;text-align:right;top:500px;font-size:12px;line-height:14px;color:#333;font-weight:400;letter-spacing:0px;transform:scaleX(0.905);transform-origin:100% 0;">600</div>
<div class="t" style="left:429.4px;width:300px;text-align:right;top:500px;font-size:12px;line-height:14px;color:#333;font-weight:400;letter-spacing:0px;transform:scaleX(0.905);transform-origin:100% 0;">30</div>
<div class="t" style="left:553.3px;width:300px;text-align:right;top:500px;font-size:12px;line-height:14px;color:#333;font-weight:400;letter-spacing:0px;transform:scaleX(0.905);transform-origin:100% 0;">890,0</div>
<div class="t" style="left:596.8px;width:300px;text-align:right;top:500px;font-size:12px;line-height:14px;color:#333;font-weight:400;letter-spacing:0px;transform:scaleX(0.905);transform-origin:100% 0;">890,0</div>
<div class="b" style="left:906.5px;top:499px;width:13px;height:13px;border:1px solid #8f8f8f;border-radius:2px;background:#fff;box-sizing:border-box"></div>
<div class="b" style="left:931px;top:499px;width:13px;height:13px;border:1px solid #8f8f8f;border-radius:2px;background:#fff;box-sizing:border-box"></div>
<svg class="b" style="left:930px;top:496px" width="18" height="18" viewBox="0 0 18 18"><path d="M4.3 8 L7.6 11.8 L14.1 2.8" fill="none" stroke="#109a4a" stroke-width="2.3" stroke-linecap="round" stroke-linejoin="round"/></svg>
<div class="b" style="left:955.8px;top:499px;width:13px;height:13px;border:1px solid #8f8f8f;border-radius:2px;background:#fff;box-sizing:border-box"></div>
<div class="t" style="left:731.3px;width:300px;text-align:right;top:500px;font-size:12px;line-height:14px;color:#333;font-weight:400;letter-spacing:0px;transform:scaleX(0.905);transform-origin:100% 0;">630</div>
<div class="b" style="left:1040.9px;top:499px;width:13px;height:13px;border:1px solid #8f8f8f;border-radius:2px;background:#fff;box-sizing:border-box"></div>
<div class="b" style="left:1064.5px;top:499px;width:13px;height:13px;border:1px solid #8f8f8f;border-radius:2px;background:#fff;box-sizing:border-box"></div>
<div class="b" style="left:1088.5px;top:499px;width:13px;height:13px;border:1px solid #8f8f8f;border-radius:2px;background:#fff;box-sizing:border-box"></div>
<div class="b" style="left:1130.5px;top:499px;width:13px;height:13px;border:1px solid #8f8f8f;border-radius:2px;background:#fff;box-sizing:border-box"></div>
<div class="t" style="left:1162px;top:500px;font-size:12px;line-height:14px;color:#333;font-weight:400;letter-spacing:0px;transform:scaleX(0.905);transform-origin:0 0;">маршрут</div>
<div class="t" style="left:1035.8px;width:300px;text-align:right;top:500px;font-size:12px;line-height:14px;color:#333;font-weight:400;letter-spacing:0px;transform:scaleX(0.905);transform-origin:100% 0;">1</div>
<div class="b" style="left:30.8px;top:518px;width:13px;height:13px;border:1px solid #8f8f8f;border-radius:2px;background:#fff;box-sizing:border-box"></div>
<svg class="b" style="left:29.8px;top:515px" width="18" height="18" viewBox="0 0 18 18"><path d="M4.3 8 L7.6 11.8 L14.1 2.8" fill="none" stroke="#109a4a" stroke-width="2.3" stroke-linecap="round" stroke-linejoin="round"/></svg>
<div class="t" style="left:54.5px;top:519px;font-size:12px;line-height:14px;color:#222;font-weight:700;letter-spacing:0px;">Алейск</div>
<div class="t" style="left:518.1px;top:519px;font-size:12px;line-height:14px;color:#333;font-weight:400;letter-spacing:0px;transform:scaleX(0.905);transform-origin:0 0;">05:00</div>
<div class="t" style="left:560px;top:519px;font-size:12px;line-height:14px;color:#333;font-weight:400;letter-spacing:0px;transform:scaleX(0.905);transform-origin:0 0;">10:00</div>
<div class="t" style="left:326.8px;width:300px;text-align:right;top:519px;font-size:12px;line-height:14px;color:#333;font-weight:400;letter-spacing:0px;transform:scaleX(0.905);transform-origin:100% 0;">2</div>
<div class="t" style="left:374.2px;width:300px;text-align:right;top:519px;font-size:12px;line-height:14px;color:#333;font-weight:400;letter-spacing:0px;transform:scaleX(0.905);transform-origin:100% 0;">690</div>
<div class="t" style="left:429.4px;width:300px;text-align:right;top:519px;font-size:12px;line-height:14px;color:#333;font-weight:400;letter-spacing:0px;transform:scaleX(0.905);transform-origin:100% 0;">300</div>
<div class="t" style="left:553.3px;width:300px;text-align:right;top:519px;font-size:12px;line-height:14px;color:#333;font-weight:400;letter-spacing:0px;transform:scaleX(0.905);transform-origin:100% 0;">2 120,0</div>
<div class="t" style="left:866px;top:519px;font-size:12px;line-height:14px;color:#333;font-weight:400;letter-spacing:0px;transform:scaleX(0.905);transform-origin:0 0;">3 01...</div>
<div class="b" style="left:906.5px;top:518px;width:13px;height:13px;border:1px solid #8f8f8f;border-radius:2px;background:#fff;box-sizing:border-box"></div>
<svg class="b" style="left:905.5px;top:515px" width="18" height="18" viewBox="0 0 18 18"><path d="M4.3 8 L7.6 11.8 L14.1 2.8" fill="none" stroke="#109a4a" stroke-width="2.3" stroke-linecap="round" stroke-linejoin="round"/></svg>
<div class="b" style="left:931px;top:518px;width:13px;height:13px;border:1px solid #8f8f8f;border-radius:2px;background:#fff;box-sizing:border-box"></div>
<svg class="b" style="left:930px;top:515px" width="18" height="18" viewBox="0 0 18 18"><path d="M4.3 8 L7.6 11.8 L14.1 2.8" fill="none" stroke="#109a4a" stroke-width="2.3" stroke-linecap="round" stroke-linejoin="round"/></svg>
<div class="b" style="left:955.8px;top:518px;width:13px;height:13px;border:1px solid #8f8f8f;border-radius:2px;background:#fff;box-sizing:border-box"></div>
<div class="t" style="left:731.3px;width:300px;text-align:right;top:519px;font-size:12px;line-height:14px;color:#333;font-weight:400;letter-spacing:0px;transform:scaleX(0.905);transform-origin:100% 0;">1 620</div>
<div class="b" style="left:1040.9px;top:518px;width:13px;height:13px;border:1px solid #8f8f8f;border-radius:2px;background:#fff;box-sizing:border-box"></div>
<div class="b" style="left:1064.5px;top:518px;width:13px;height:13px;border:1px solid #8f8f8f;border-radius:2px;background:#fff;box-sizing:border-box"></div>
<div class="b" style="left:1088.5px;top:518px;width:13px;height:13px;border:1px solid #8f8f8f;border-radius:2px;background:#fff;box-sizing:border-box"></div>
<div class="b" style="left:1130.5px;top:518px;width:13px;height:13px;border:1px solid #8f8f8f;border-radius:2px;background:#fff;box-sizing:border-box"></div>
<div class="t" style="left:1162px;top:519px;font-size:12px;line-height:14px;color:#333;font-weight:400;letter-spacing:0px;transform:scaleX(0.905);transform-origin:0 0;">маршрут</div>
<div class="t" style="left:1035.8px;width:300px;text-align:right;top:519px;font-size:12px;line-height:14px;color:#333;font-weight:400;letter-spacing:0px;transform:scaleX(0.905);transform-origin:100% 0;">1</div>
<div class="b" style="left:900px;top:441px;width:27px;height:96.7px;border:2.2px solid #f47a30;box-sizing:border-box;box-shadow:1px 2px 5px rgba(0,0,0,.35), inset 0 0 6px rgba(0,0,0,.3)"></div>
<div class="b" style="left:558px;top:165px;width:299px;height:83px;background:rgba(0,0,0,.09);border-radius:2px 0 0 2px"></div>
<div class="b" style="left:561px;top:168px;width:296px;height:78px;border:1px solid #555;border-right:none;border-top:1px solid #666;background:#fff;box-sizing:border-box"></div>
<div class="b" style="left:562px;top:188px;width:295px;height:19px;background:#f7c920"></div>
<div class="t" style="left:566.3px;top:171.7px;font-size:12px;line-height:14px;color:#222;font-weight:400;letter-spacing:0px;transform:scaleX(0.905);transform-origin:0 0;">Закрытый</div>
<div class="t" style="left:566.3px;top:190.8px;font-size:12px;line-height:14px;color:#222;font-weight:400;letter-spacing:0px;transform:scaleX(0.905);transform-origin:0 0;">Исполняемый</div>
<div class="t" style="left:566.3px;top:209.9px;font-size:12px;line-height:14px;color:#222;font-weight:400;letter-spacing:0px;transform:scaleX(0.905);transform-origin:0 0;">Оформляемый</div>
<div class="t" style="left:566.3px;top:229px;font-size:12px;line-height:14px;color:#222;font-weight:400;letter-spacing:0px;transform:scaleX(0.905);transform-origin:0 0;">Редактируемый</div>
<svg class="b" style="left:0;top:0" width="1361" height="543" viewBox="0 0 1361 543">
<defs><filter id="sh" x="-20%" y="-20%" width="140%" height="140%"><feGaussianBlur in="SourceAlpha" stdDeviation="2.4"/><feOffset dx="2" dy="3"/><feComponentTransfer><feFuncA type="linear" slope="0.5"/></feComponentTransfer><feMerge><feMergeNode/><feMergeNode in="SourceGraphic"/></feMerge></filter></defs>
<g filter="url(#sh)">
<path d="M450 120.5 L356 120.5" fill="none" stroke="#fa8005" stroke-width="3.4" stroke-dasharray="3.6 3.2"/>
<path d="M335 120 L357.5 112.5 L353.5 120 L357.5 128 Z" fill="#fa8005"/>
<path d="M646 111 C 690 55, 822 50, 862 112" fill="none" stroke="#fa8005" stroke-width="3.4" stroke-dasharray="3.6 3.2"/>
<path d="M875 127 L855.6 115.8 L863 113 L870 106.6 Z" fill="#fa8005"/>
<path d="M838 197.5 L675 165" fill="none" stroke="#fa8005" stroke-width="3.4" stroke-dasharray="3.6 3.2"/>
<path d="M654 160.8 L677 157.6 L673 164.5 L673.5 172.6 Z" fill="#fa8005"/>
<path d="M110.5 219.5 C 158 191, 282 191, 343 212.5" fill="none" stroke="#fa8005" stroke-width="3.4" stroke-dasharray="3.6 3.2"/>
<path d="M362.2 215.9 L342.2 205.3 L343.5 213 L338.6 220.6 Z" fill="#fa8005"/>
<path d="M232 466 L203 452" fill="none" stroke="#fa8005" stroke-width="3.4" stroke-dasharray="3.6 3.2"/>
<path d="M185.9 443.5 L209.4 446.5 L203.5 452 L202.4 460.9 Z" fill="#fa8005"/>
<path d="M267 466 L296 452" fill="none" stroke="#fa8005" stroke-width="3.4" stroke-dasharray="3.6 3.2"/>
<path d="M314.1 442.6 L290.6 445.6 L296 452 L297.6 459.7 Z" fill="#fa8005"/>
</g>
</svg>
<svg class="b" style="left:4.5px;top:52.3px" width="30" height="30" viewBox="0 0 30 30">
<defs><filter id="bs8" x="-30%" y="-30%" width="160%" height="160%"><feGaussianBlur in="SourceAlpha" stdDeviation="1.4"/><feOffset dx="1.2" dy="1.8"/><feComponentTransfer><feFuncA type="linear" slope="0.6"/></feComponentTransfer><feMerge><feMergeNode/><feMergeNode in="SourceGraphic"/></feMerge></filter></defs>
<g filter="url(#bs8)"><circle cx="15" cy="15" r="11.4" fill="#fff" stroke="rgba(0,0,0,.13)" stroke-width=".8"/><circle cx="15" cy="15" r="9.2" fill="#f97d00"/></g>
<path transform="translate(11.5 10.5)" d="M1.9 0.8 H5.1 L6.2 1.9 V3.4 L5.2 4.4 H1.8 L0.8 3.4 V1.9 Z M1.8 4.4 L0.8 5.4 V7.2 L1.9 8.3 H5.1 L6.2 7.2 V5.4 L5.2 4.4" fill="none" stroke="#fff" stroke-width="1.5" stroke-linejoin="miter" stroke-linecap="butt"/>
</svg>
<svg class="b" style="left:445.6px;top:106.3px" width="30" height="30" viewBox="0 0 30 30">
<defs><filter id="bs6" x="-30%" y="-30%" width="160%" height="160%"><feGaussianBlur in="SourceAlpha" stdDeviation="1.4"/><feOffset dx="1.2" dy="1.8"/><feComponentTransfer><feFuncA type="linear" slope="0.6"/></feComponentTransfer><feMerge><feMergeNode/><feMergeNode in="SourceGraphic"/></feMerge></filter></defs>
<g filter="url(#bs6)"><circle cx="15" cy="15" r="11.4" fill="#fff" stroke="rgba(0,0,0,.13)" stroke-width=".8"/><circle cx="15" cy="15" r="9.2" fill="#f97d00"/></g>
<path transform="translate(11.5 10.5)" d="M5.9 0.8 H2.2 L0.8 2.2 V7.2 L1.9 8.3 H5.1 L6.2 7.2 V5.3 L5.1 4.3 H0.8" fill="none" stroke="#fff" stroke-width="1.5" stroke-linejoin="miter" stroke-linecap="butt"/>
</svg>
<svg class="b" style="left:609.5px;top:107px" width="30" height="30" viewBox="0 0 30 30">
<defs><filter id="bs1" x="-30%" y="-30%" width="160%" height="160%"><feGaussianBlur in="SourceAlpha" stdDeviation="1.4"/><feOffset dx="1.2" dy="1.8"/><feComponentTransfer><feFuncA type="linear" slope="0.6"/></feComponentTransfer><feMerge><feMergeNode/><feMergeNode in="SourceGraphic"/></feMerge></filter></defs>
<g filter="url(#bs1)"><circle cx="15" cy="15" r="11.4" fill="#fff" stroke="rgba(0,0,0,.13)" stroke-width=".8"/><circle cx="15" cy="15" r="9.2" fill="#f97d00"/></g>
<path transform="translate(11.5 10.5)" d="M1.2 2 L3.4 0.8 V8.2 M0.9 8.3 H5.9" fill="none" stroke="#fff" stroke-width="1.5" stroke-linejoin="miter" stroke-linecap="butt"/>
</svg>
<svg class="b" style="left:857px;top:122.4px" width="30" height="30" viewBox="0 0 30 30">
<defs><filter id="bs2" x="-30%" y="-30%" width="160%" height="160%"><feGaussianBlur in="SourceAlpha" stdDeviation="1.4"/><feOffset dx="1.2" dy="1.8"/><feComponentTransfer><feFuncA type="linear" slope="0.6"/></feComponentTransfer><feMerge><feMergeNode/><feMergeNode in="SourceGraphic"/></feMerge></filter></defs>
<g filter="url(#bs2)"><circle cx="15" cy="15" r="11.4" fill="#fff" stroke="rgba(0,0,0,.13)" stroke-width=".8"/><circle cx="15" cy="15" r="9.2" fill="#f97d00"/></g>
<path transform="translate(11.5 10.5)" d="M0.8 2 L1.9 0.8 H5.1 L6.2 1.9 V3.5 L5.1 4.6 H1.9 L0.8 5.7 V8.3 H6.4" fill="none" stroke="#fff" stroke-width="1.5" stroke-linejoin="miter" stroke-linecap="butt"/>
</svg>
<svg class="b" style="left:86.3px;top:216.5px" width="30" height="30" viewBox="0 0 30 30">
<defs><filter id="bs3" x="-30%" y="-30%" width="160%" height="160%"><feGaussianBlur in="SourceAlpha" stdDeviation="1.4"/><feOffset dx="1.2" dy="1.8"/><feComponentTransfer><feFuncA type="linear" slope="0.6"/></feComponentTransfer><feMerge><feMergeNode/><feMergeNode in="SourceGraphic"/></feMerge></filter></defs>
<g filter="url(#bs3)"><circle cx="15" cy="15" r="11.4" fill="#fff" stroke="rgba(0,0,0,.13)" stroke-width=".8"/><circle cx="15" cy="15" r="9.2" fill="#f97d00"/></g>
<path transform="translate(11.5 10.5)" d="M0.8 1.4 V0.8 H5.1 L6.2 1.9 V3.4 L5.2 4.5 H2.2 M5.2 4.5 L6.2 5.5 V7.2 L5.1 8.3 H0.8 V7.6" fill="none" stroke="#fff" stroke-width="1.5" stroke-linejoin="miter" stroke-linecap="butt"/>
</svg>
<svg class="b" style="left:356.6px;top:217.3px" width="30" height="30" viewBox="0 0 30 30">
<defs><filter id="bs4" x="-30%" y="-30%" width="160%" height="160%"><feGaussianBlur in="SourceAlpha" stdDeviation="1.4"/><feOffset dx="1.2" dy="1.8"/><feComponentTransfer><feFuncA type="linear" slope="0.6"/></feComponentTransfer><feMerge><feMergeNode/><feMergeNode in="SourceGraphic"/></feMerge></filter></defs>
<g filter="url(#bs4)"><circle cx="15" cy="15" r="11.4" fill="#fff" stroke="rgba(0,0,0,.13)" stroke-width=".8"/><circle cx="15" cy="15" r="9.2" fill="#f97d00"/></g>
<path transform="translate(11.5 10.5)" d="M4.9 8.6 V0.8 L0.7 5.9 H6.6" fill="none" stroke="#fff" stroke-width="1.5" stroke-linejoin="miter" stroke-linecap="butt"/>
</svg>
<svg class="b" style="left:234.4px;top:445.3px" width="30" height="30" viewBox="0 0 30 30">
<defs><filter id="bs5" x="-30%" y="-30%" width="160%" height="160%"><feGaussianBlur in="SourceAlpha" stdDeviation="1.4"/><feOffset dx="1.2" dy="1.8"/><feComponentTransfer><feFuncA type="linear" slope="0.6"/></feComponentTransfer><feMerge><feMergeNode/><feMergeNode in="SourceGraphic"/></feMerge></filter></defs>
<g filter="url(#bs5)"><circle cx="15" cy="15" r="11.4" fill="#fff" stroke="rgba(0,0,0,.13)" stroke-width=".8"/><circle cx="15" cy="15" r="9.2" fill="#f97d00"/></g>
<path transform="translate(11.5 10.5)" d="M6.3 0.8 H1.1 V4.3 H5.1 L6.2 5.4 V7.2 L5.1 8.3 H0.8" fill="none" stroke="#fff" stroke-width="1.5" stroke-linejoin="miter" stroke-linecap="butt"/>
</svg>
<svg class="b" style="left:833px;top:180px" width="30" height="30" viewBox="0 0 30 30">
<defs><filter id="bs7" x="-30%" y="-30%" width="160%" height="160%"><feGaussianBlur in="SourceAlpha" stdDeviation="1.4"/><feOffset dx="1.2" dy="1.8"/><feComponentTransfer><feFuncA type="linear" slope="0.6"/></feComponentTransfer><feMerge><feMergeNode/><feMergeNode in="SourceGraphic"/></feMerge></filter></defs>
<g filter="url(#bs7)"><circle cx="15" cy="15" r="11.4" fill="#fff" stroke="rgba(0,0,0,.13)" stroke-width=".8"/><circle cx="15" cy="15" r="9.2" fill="#f97d00"/></g>
<path transform="translate(11.5 10.5)" d="M0.8 1.6 V0.8 H6.3 V2.2 L3.2 8.6" fill="none" stroke="#fff" stroke-width="1.5" stroke-linejoin="miter" stroke-linecap="butt"/>
</svg>
</body></html>
